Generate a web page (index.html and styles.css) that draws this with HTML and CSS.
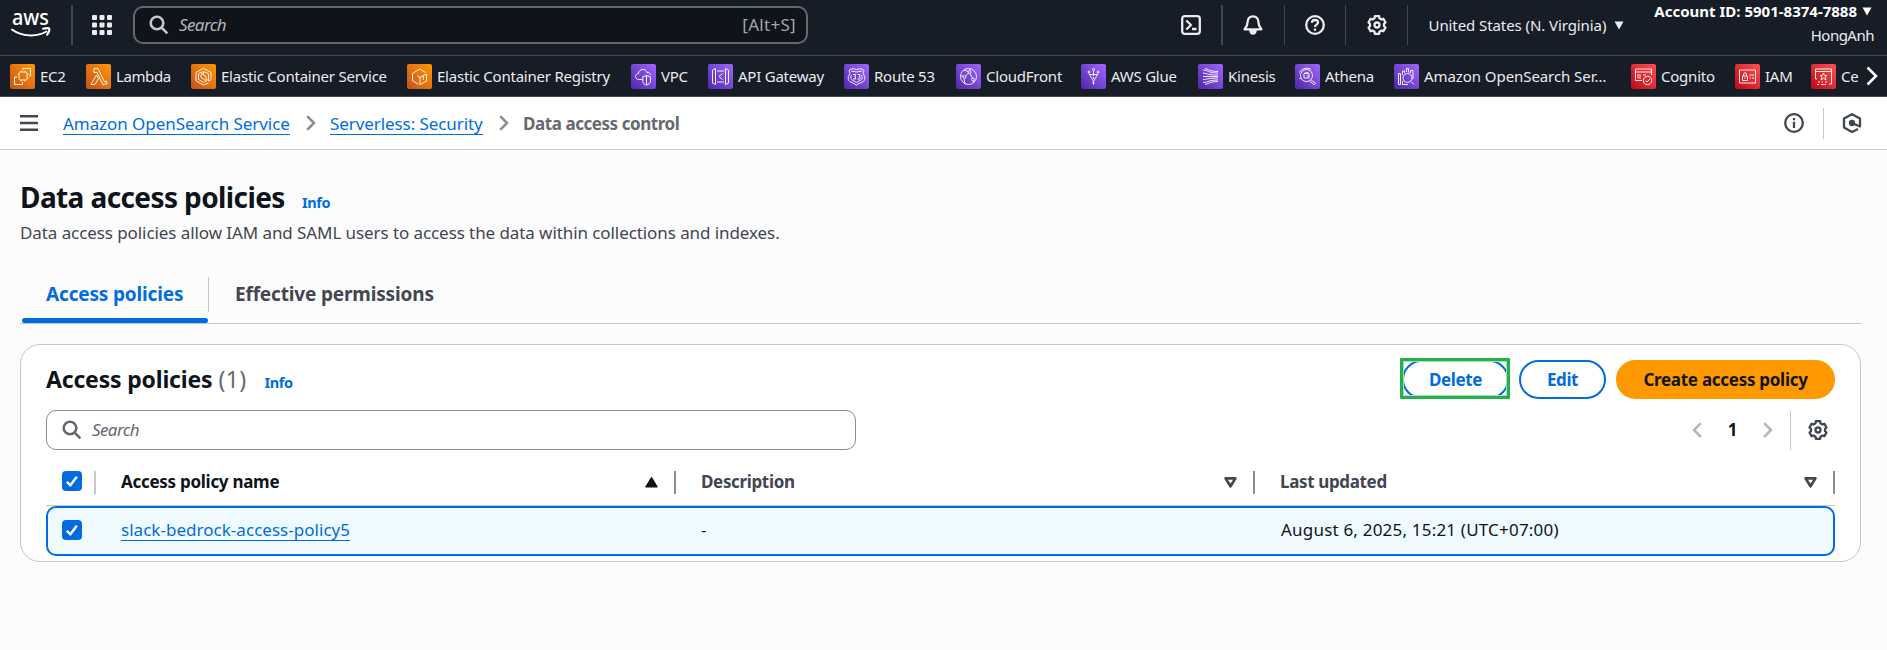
FILE: index.html
```
<!DOCTYPE html>
<html lang="en">
<head>
<meta charset="utf-8">
<title>Data access policies</title>
<link rel="stylesheet" href="styles.css">
</head>
<body>
<svg class="defs" width="0" height="0" aria-hidden="true">
  <defs>
    <symbol id="gear" viewBox="0 0 20 20"><path d="M7.87 1.2H12.13L12.5 3.3L14.5 4.5L16.4 3.8L18.5 7.5L17 8.8V11.2L18.5 12.5L16.4 16.2L14.5 15.5L12.5 16.7L12.13 18.8H7.87L7.5 16.7L5.5 15.5L3.6 16.2L1.5 12.5L3 11.2V8.8L1.5 7.5L3.6 3.8L5.5 4.5L7.5 3.3Z"/><circle cx="10" cy="10" r="2.5"/></symbol>
    <symbol id="lens" viewBox="0 0 20 20"><circle cx="8" cy="8" r="6.3"/><path d="M12.6 12.6L18.3 18.3"/></symbol>
    <symbol id="chev" viewBox="0 0 10 16"><path d="M1.2 1.2L8 8L1.2 14.8"/></symbol>
    <symbol id="check" viewBox="0 0 20 20"><path d="M4.8 10.8L8.4 14.2L14.8 5.8"/></symbol>
    <symbol id="sort" viewBox="0 0 13 11"><path d="M1.6 1.4H11.4L6.5 9.3Z"/></symbol>
  </defs>
</svg>

<header class="topbar">
  <div class="logo"><svg width="42" height="28" viewBox="0 0 42 28"><text x="2" y="15" textLength="37" lengthAdjust="spacingAndGlyphs" class="logo-text">aws</text><path d="M2 19.5C12 27 27 27 36.5 21.5"/><path d="M33 18.8C36 18 39 18 39.3 18.6C39.6 20 38.7 22.8 37 24.8" /></svg></div>
  <div class="bar bar-wide"></div>
  <svg class="apps" width="20" height="20" viewBox="0 0 20 20"><rect width="5" height="5" rx="1"/><rect x="7.5" width="5" height="5" rx="1"/><rect x="15" width="5" height="5" rx="1"/><rect y="7.5" width="5" height="5" rx="1"/><rect x="7.5" y="7.5" width="5" height="5" rx="1"/><rect x="15" y="7.5" width="5" height="5" rx="1"/><rect y="15" width="5" height="5" rx="1"/><rect x="7.5" y="15" width="5" height="5" rx="1"/><rect x="15" y="15" width="5" height="5" rx="1"/></svg>
  <div class="top-search"><svg class="line" width="20" height="20"><use href="#lens"/></svg><span class="ph">Search</span><span class="key">[Alt+S]</span></div>
  <div class="tools">
    <div class="tool"><svg class="line" width="20" height="20" viewBox="0 0 20 20"><rect x="1.2" y="1.2" width="17.6" height="17.6" rx="2.5"/><path d="M5.3 5.5L10 10L5.3 14.5M11 14H15.5"/></svg></div>
    <div class="tool t2"><svg class="line" width="20" height="20" viewBox="0 0 20 20"><path d="M10 1.3C6.5 1.3 4.6 3.8 4.6 7C4.6 10.5 3.6 12 1.6 14.3H18.4C16.4 12 15.4 10.5 15.4 7C15.4 3.8 13.5 1.3 10 1.3Z"/><path d="M7.3 15.6C7.6 17.6 8.5 18.7 10 18.7S12.4 17.6 12.7 15.6Z" fill="#ebebf0"/></svg></div>
    <div class="tool t3"><svg class="line" width="20" height="20" viewBox="0 0 20 20"><circle cx="10" cy="10" r="8.8"/><path d="M7 7.8C7 5.8 8.4 5 10 5S13 6 13 7.6C13 9.6 10 9.6 10 12"/><path d="M10 13.5V15.8"/></svg></div>
    <div class="tool"><svg class="line" width="20" height="20"><use href="#gear"/></svg></div>
    <div class="region"><span>United States (N. Virginia)</span><svg width="10" height="9" viewBox="0 0 10 9"><path d="M.5 .5H9.5L5 8.5Z"/></svg></div>
  </div>
  <div class="account"><div class="acct-id"><span>Account ID: 5901-8374-7888</span><svg width="10" height="9" viewBox="0 0 10 9"><path d="M.5 .5H9.5L5 8.5Z"/></svg></div><div class="acct-name">HongAnh</div></div>
</header>

<nav class="services">
  <div class="svc-list">
    <a class="svc orange"><svg viewBox="0 0 25 25"><rect x="9" y="8" width="8" height="8" rx="1.5"/><path d="M13 6V4.500H20.500V12H19M7 13H4.500V20.500H12.500V18M11 6.500V8M15 6.500V8M11 16V17.500M15 16V17.500M17 10H18.500M17 14H18.500M7.500 10H9"/></svg><span>EC2</span></a>
    <a class="svc orange tight"><svg viewBox="0 0 25 25"><path d="M8 4.500H12L18.500 18L20.500 17L21 19.500L17 20.800L11 8.500H8ZM10.500 11L5 20.500H9L12.500 14.500Z"/></svg><span>Lambda</span></a>
    <a class="svc orange"><svg viewBox="0 0 25 25"><path d="M17.500 19L12.500 21L5 16.800V8.500L12.500 4.300L20 8.500V14.500M17.500 17L20.500 15.500M12.500 7.500V11L15 12.500V15L17.500 16.500V9.800ZM11 7.800L7.500 9.800V15.500L12.500 18.300L15.500 16.800L12.500 15L10 13.500V10.800L11 10.300Z"/></svg><span>Elastic Container Service</span></a>
    <a class="svc orange"><svg viewBox="0 0 25 25"><path d="M11.500 20.500L5.500 16.500V9.500L12.500 5L18.500 8.500M19.500 10L13 13.500V20.500L19.500 17ZM16.300 12V16M13 13.500L10.500 12"/></svg><span>Elastic Container Registry</span></a>
    <a class="svc purple"><svg viewBox="0 0 25 25"><path d="M11 15.500H7.500C3.500 15 3.500 10 7.500 9.500C8 4.500 15 4 16 8.500C18.500 8 19.500 10 19.500 11M15.500 11.500L19.500 12.800V17.500C19 19.500 17.500 20.500 15.500 21C13.500 20.500 12 19.500 11.800 17.500V12.800ZM15.500 11.500V21"/></svg><span>VPC</span></a>
    <a class="svc purple"><svg viewBox="0 0 25 25"><path d="M7.500 4.500V20.500L4.500 19V6ZM17.500 4.500V20.500L20.500 19V6ZM9 7H16M9 18H16M14.500 9.500L11 12.500L14.500 15.500"/></svg><span>API Gateway</span></a>
    <a class="svc purple"><svg viewBox="0 0 25 25"><path d="M5 6.500L8 4.500L12.500 5.500L17 4.500L20 6.500L19 9.500C22.500 14 20.500 18 17 18.500L12.500 21L8 18.500C4.500 18 2.500 14 6 9.500ZM7 7L12.500 8L18 7M7.500 11C6 14 7 16 9 16.500L12.500 18.500L16 16.500C18 16 19 14 17.500 11M9 10.500H11.500V12L10.500 12.500L11.500 13V15H9M13.500 10.500H16V12L15 12.500L16 13V15H13.500"/></svg><span>Route 53</span></a>
    <a class="svc purple"><svg viewBox="0 0 25 25"><circle cx="12.500" cy="12.500" r="8"/><circle cx="13.500" cy="8" r="1.400"/><circle cx="8.500" cy="13" r="1.400"/><circle cx="17" cy="15.500" r="1.400"/><path d="M12.500 9L9.500 12M14 9.500L16.500 14M8 14.500L9 20M5 12H7M14 4.700V6.500M18 17L17 19M8 6L12 7.500"/></svg><span>CloudFront</span></a>
    <a class="svc purple"><svg viewBox="0 0 25 25"><path d="M12.500 20.500V17.500L8 9.500M12.500 17.500L17 9.500M12.500 7V12M12.500 13V15M8.500 10.500H16.500"/><circle cx="8" cy="8" r="1"/><circle cx="12.500" cy="5.500" r="1"/><circle cx="17" cy="8" r="1"/><circle cx="12.500" cy="19" r=".7"/></svg><span>AWS Glue</span></a>
    <a class="svc purple"><svg viewBox="0 0 25 25"><path d="M5 6C10 6 10 9 20 9M7 4.500C10 5 12 7.500 20 7.500M5 9C9 9.500 10 11 20 11M5 12.500H20M5 15.500C9 15.500 10 14 20 14M5 18.500C10 18.500 10 16 20 16M7 20.500C10 20 12 17.500 20 17.500"/></svg><span>Kinesis</span></a>
    <a class="svc purple"><svg viewBox="0 0 25 25"><circle cx="11.500" cy="11.500" r="6"/><path d="M15.800 15.800L20.800 19.300L19.300 20.800L14.500 17M9 9.500H14V14H9ZM9 9.500C10 8.300 13 8.300 14 9.500M4.500 8.500C6 4.500 12 3 16 5.500M4.500 14.500H6M11.500 12H14"/></svg><span>Athena</span></a>
    <a class="svc purple aos"><svg viewBox="0 0 25 25"><circle cx="13.500" cy="14" r="4.500"/><path d="M17 17.500L20 20.500M4.500 9.500H6.500V20.500H4.500ZM8.500 11V7H10.500V9M12.500 8V4.500H14.500V8.500M16.500 9V6.500H19V15M8.500 17V20.500H14"/></svg><span>Amazon OpenSearch Ser…</span></a>
    <a class="svc red"><svg viewBox="0 0 25 25"><path d="M11 16.500H4.500V5H20.500V11M4.500 8H20.500M7 10V14M9 10V13M12 11H15M7 14H10"/><circle cx="16.500" cy="16.500" r="4.200"/><path d="M14.500 16.500L16 18L19 15"/></svg><span>Cognito</span></a>
    <a class="svc red"><svg viewBox="0 0 25 25"><path d="M4.500 6H20.500V19H4.500ZM7.500 12H12.500V16.500H7.500ZM8.500 12V10C8.500 8.500 11.500 8.500 11.500 10V12M14.500 11H19M14.500 14H16M17 14H19M10 13.500V15"/></svg><span>IAM</span></a>
    <a class="svc red"><svg viewBox="0 0 25 25"><path d="M6 15H4.500V5H20.500V20H18M4.500 7.500H20.500M12.500 9L13.500 11.500H16L14 13L15 16L12.500 14.300L10 16L11 13L9 11.500H11.500ZM7 18H9M10.500 18H12M14 18H16M6 20.500H8M10 20.500H15"/></svg><span>Ce</span></a>
  </div>
  <svg class="svc-next" width="12" height="20" viewBox="0 0 12 20"><path d="M1.500 1.500L10 10L1.500 18.500"/></svg>
</nav>

<div class="crumbs">
  <svg class="menu" width="18" height="16" viewBox="0 0 18 16"><path d="M0 1.200H18M0 8H18M0 14.800H18"/></svg>
  <a class="link c1">Amazon OpenSearch Service</a>
  <svg class="sep" width="10" height="16"><use href="#chev"/></svg>
  <a class="link c2">Serverless: Security</a>
  <svg class="sep" width="10" height="16"><use href="#chev"/></svg>
  <span class="current">Data access control</span>
  <div class="crumb-tools">
    <svg class="dark" width="20" height="20" viewBox="0 0 20 20"><circle cx="10" cy="10" r="8.800"/><path d="M10 8.700V15M10 5V7.200"/></svg>
    <i></i>
    <svg class="dark" width="20" height="20" viewBox="0 0 20 20"><path d="M16 16L10 19L2 14.600V5.500L10 1.200L18 5.500V13.500L10.500 10.200"/><circle cx="10" cy="10" r="2" fill="#424650"/></svg>
  </div>
</div>

<main>
  <div class="title"><h1>Data access policies</h1><a class="info">Info</a></div>
  <p class="desc">Data access policies allow IAM and SAML users to access the data within collections and indexes.</p>
  <div class="tabs"><div class="tab active">Access policies</div><div class="tab-sep"></div><div class="tab">Effective permissions</div></div>

  <section class="panel">
    <div class="panel-head">
      <h2>Access policies</h2><span class="count">(1)</span><a class="info">Info</a>
      <div class="actions">
        <div class="marked"><button class="btn del">Delete</button></div>
        <button class="btn edit">Edit</button>
        <button class="btn primary">Create access policy</button>
      </div>
    </div>
    <div class="filter">
      <div class="find"><svg class="grey" width="20" height="20"><use href="#lens"/></svg><span>Search</span></div>
      <div class="pager"><svg class="flip" width="10" height="16"><use href="#chev"/></svg><b>1</b><svg width="10" height="16"><use href="#chev"/></svg><i></i><svg class="dark" width="20" height="20"><use href="#gear"/></svg></div>
    </div>
    <div class="row head">
      <div class="cell pick"><span class="box"><svg width="20" height="20"><use href="#check"/></svg></span></div>
      <div class="cell sorted"><span class="lbl">Access policy name</span><svg class="up" width="13" height="11" viewBox="0 0 13 11"><path d="M1 9.800H12L6.500 1Z"/></svg></div>
      <div class="cell"><span class="lbl">Description</span><svg class="down" width="13" height="11"><use href="#sort"/></svg></div>
      <div class="cell"><span class="lbl">Last updated</span><svg class="down" width="13" height="11"><use href="#sort"/></svg></div>
    </div>
    <div class="row selected">
      <div class="cell pick"><span class="box"><svg width="20" height="20"><use href="#check"/></svg></span></div>
      <div class="cell"><a class="link">slack-bedrock-access-policy5</a></div>
      <div class="cell dash">-</div>
      <div class="cell date">August 6, 2025, 15:21 (UTC+07:00)</div>
    </div>
  </section>
</main>
</body>
</html>
```
FILE: styles.css
```
* { box-sizing: border-box; }
body { margin: 0; height: 650px; overflow: hidden; background: #fcfcfd; color: #0f141a; font: 17px/24px "Noto Sans", "Open Sans", sans-serif; }
svg { display: block; flex: none; fill: none; }
.defs { position: absolute; }
h1, h2, p { margin: 0; }

/* Top bar */
.topbar { display: flex; align-items: flex-start; height: 56px; background: #161d26; border-bottom: 1px solid #424650; color: #ebebf0; font-size: 15px; }
.logo { width: 71px; padding: 10px 0 0 10px; }
.logo svg { overflow: visible; }
.logo path { stroke: #fff; stroke-width: 2; stroke-linecap: round; }
.logo-text { font: 500 22px "Noto Sans", sans-serif; fill: #fff; }
.bar-wide { width: 2px; height: 40px; margin-top: 5px; background: #424650; }
.apps { margin: 15px 21px 0 19px; fill: #ebebf0; }
.line { stroke: #ebebf0; stroke-width: 2.3; stroke-linejoin: round; }
.top-search { display: flex; align-items: center; width: 675px; height: 38px; margin-top: 6px; padding: 0 10px 0 14px; background: #0f141a; border: 2px solid #656871; border-radius: 10px; font-size: 17px; color: #b4b4bb; }
.top-search svg { stroke: #c6c6cd; stroke-width: 2.6; }
.ph { margin-left: 10px; font-style: italic; letter-spacing: -.6px; }
.key { margin-left: auto; letter-spacing: .3px; color: #a4a4ad; }
.tools { display: flex; margin: 5px 0 0 352px; }
.tool { width: 61.500px; height: 40px; padding: 10px 0 0 21px; border-right: 1px solid #424650; }
.tool:first-child { width: 63px; border-right-width: 2px; }
.tool.t2, .tool.t3 { padding-left: 20px; }
.region { display: flex; align-items: center; gap: 8px; height: 40px; padding-left: 21px; letter-spacing: -.08px; }
.region span { line-height: 40px; }
.region svg { fill: #ebebf0; }
.account { margin-left: auto; padding-right: 13px; color: #fff; }
.acct-id { display: flex; align-items: center; gap: 5px; height: 22px; margin-right: 2px; font-weight: 700; }
.acct-id svg { fill: #fff; }
.acct-name { margin-top: 1px; text-align: right; letter-spacing: -.5px; color: #ebebf0; }

/* Service shortcuts */
.services { display: flex; align-items: center; height: 41px; padding-left: 10px; background: #161d26; border-bottom: 1px solid #424650; }
.svc-list { display: grid; grid-template-columns: 76px 105px 216px 224px 77px 136px 112px 125px 117px 97px 99px 237px 104px 76px 45px; width: 1846px; }
.svc { display: flex; align-items: center; min-width: 0; gap: 5px; white-space: nowrap; color: #ebebf0; font-size: 15px; letter-spacing: -.23px; }
.svc svg { width: 25px; height: 25px; border-radius: 2px; stroke: #fff; stroke-width: 1; stroke-opacity: .9; }
.tight { letter-spacing: -.4px; }
.aos { letter-spacing: -.07px; }
.orange svg { background: linear-gradient(45deg, #c8511b, #f90); }
.purple svg { background: linear-gradient(45deg, #4d27a8, #a166ff); }
.red svg { background: linear-gradient(45deg, #bd0816, #ff5252); }
.svc-next { margin-left: 10px; stroke: #fff; stroke-width: 2.600; }

/* Breadcrumbs */
.crumbs { display: flex; align-items: center; height: 53px; padding: 0 25px 0 20px; background: #fff; border-bottom: 1px solid #c6c6cd; }
.menu { margin-right: 25px; stroke: #424650; stroke-width: 2.400; }
.link { color: #006ce0; line-height: 22px; border-bottom: 1px solid #006ce0; }
.c1 { width: 227px; white-space: nowrap; letter-spacing: -.06px; }
.c2 { width: 153px; white-space: nowrap; letter-spacing: -.08px; }
.crumbs .link { line-height: 21px; padding-top: 1px; }
.sep { margin: 0 14px 0 16px; stroke: #8c8c94; stroke-width: 2.500; }
.current { padding-top: 1px; font-weight: 700; letter-spacing: -.44px; color: #656871; }
.crumb-tools { display: flex; align-items: center; margin-left: auto; }
.crumb-tools i { width: 1px; height: 31px; margin: 0 18px 0 19px; background: #c6c6cd; }
.dark { stroke: #424650; stroke-width: 2.300; stroke-linejoin: round; }

/* Page header */
main { padding: 29px 26px 0 20px; }
.title { display: flex; align-items: baseline; }
h1 { width: 282px; font-size: 28px; line-height: 36px; letter-spacing: -.6px; }
.info { font-size: 14.500px; font-weight: 700; letter-spacing: -.4px; color: #006ce0; }
.desc { margin-top: 6px; letter-spacing: -.08px; color: #424650; }
.tabs { display: flex; height: 79px; padding-top: 32px; border-bottom: 1px solid #c6c6cd; font-size: 19px; font-weight: 700; letter-spacing: -.16px; color: #424650; }
.tab { height: 46px; padding-left: 26px; line-height: 35px; }
.tab.active { width: 186px; margin-left: 2px; padding-left: 24px; color: #006ce0; position: relative; }
.tab.active::after { content: ""; position: absolute; left: 0; bottom: 0; width: 186px; height: 5px; border-radius: 3px; background: #006ce0; }
.tab-sep { width: 1px; height: 35px; background: #c6c6cd; }

/* Policies panel */
.panel { width: 1841px; height: 218px; margin-top: 20px; padding: 13px 25px 0; background: #fff; border: 1px solid #c6c6cd; border-radius: 20px; }
.panel-head { display: flex; align-items: baseline; height: 52px; }
h2 { font-size: 23px; line-height: 42px; letter-spacing: -.18px; }
.count { width: 46px; margin-left: 6px; font-size: 23px; letter-spacing: .4px; color: #656871; }
.actions { display: flex; align-self: flex-start; align-items: flex-start; margin-left: auto; }
.btn { height: 39px; margin-top: 2px; padding: 0 0 1px; border: 2px solid #006ce0; border-radius: 20px; background: #fff; color: #006ce0; font: 700 17px/33px "Noto Sans", sans-serif; letter-spacing: -.38px; }
.marked { width: 110px; height: 41px; margin-right: 9px; position: relative; }
.marked::after { content: ""; position: absolute; inset: 0; border: 3px solid #22b14c; box-shadow: inset 0 0 0 1px #a8dfb8; border-radius: 1px; }
.del { width: 107px; margin-left: 2px; }
.edit { width: 87px; }
.primary { width: 219px; margin-left: 10px; border-color: #f90; background: #f90; color: #0f141a; letter-spacing: -.28px; }
.filter { display: flex; justify-content: space-between; height: 40px; }
.find { display: flex; align-items: center; width: 810px; height: 40px; padding-left: 15px; border: 1px solid #8c8c94; border-radius: 10px; color: #656871; font-style: italic; letter-spacing: -.6px; }
.find span { margin: -1px 0 0 10px; }
.grey { stroke: #656871; stroke-width: 2.600; }
.pager { display: flex; align-items: center; padding-right: 7px; }
.pager svg:not(.dark) { stroke: #b4b4bb; stroke-width: 2.500; }
.pager b { width: 61px; text-align: center; }
.flip { transform: scaleX(-1); }
.pager i { width: 1px; height: 39px; margin: 0 17px; background: #c6c6cd; }
.row { display: grid; grid-template-columns: 50px 580px 579px 580px; }
.cell { display: flex; align-items: center; padding-left: 25px; }
.pick { padding-left: 16px; }
.box { width: 20px; height: 20px; border-radius: 4px; background: #006ce0; }
.box svg { stroke: #fff; stroke-width: 2.500; }
.head { height: 56px; padding: 21px 0 11px; border-bottom: 1px solid #c6c6cd; color: #424650; font-weight: 700; letter-spacing: -.35px; }
.head .cell { height: 23px; border-right: 2px solid #8c8c94; }
.head .pick { border-color: #c6c6cd; align-items: flex-start; }
.head .sorted { color: #0f141a; letter-spacing: -.28px; }
.lbl { margin-top: -2px; }
.up, .down { margin: 0 16px 0 auto; stroke-linejoin: round; }
.up { fill: #0f141a; stroke: #0f141a; stroke-width: 1.500; }
.down { stroke: #424650; stroke-width: 2.700; }
.selected { grid-template-columns: 48px 580px 579px 578px; height: 50px; border: 2px solid #006ce0; border-radius: 10px; background: #f0fbff; }
.selected .pick { padding: 0 0 2px 14px; }
.selected .link { margin-top: -1px; line-height: 21px; letter-spacing: .03px; }
.date { padding-left: 26px; letter-spacing: .2px; }
.selected .cell:not(.pick) { padding-bottom: 2px; }
```
